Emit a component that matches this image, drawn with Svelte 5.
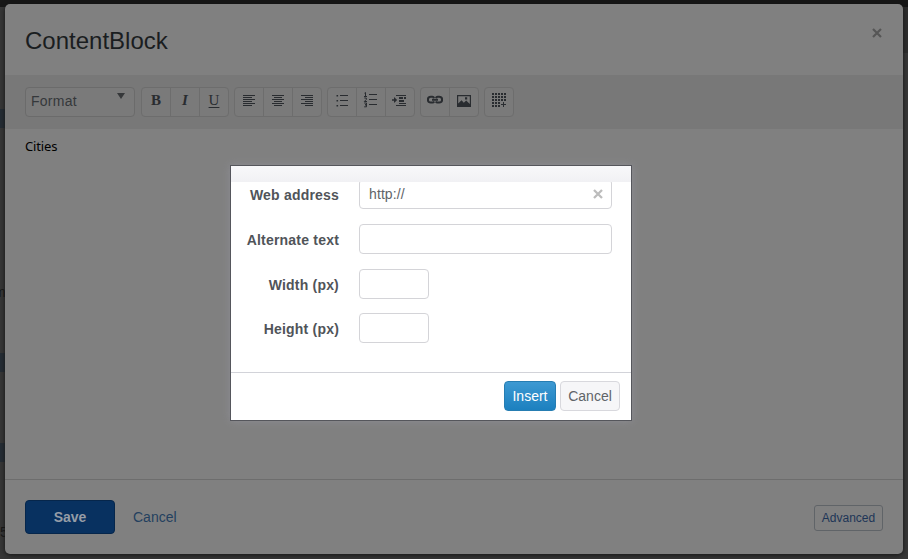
<script>
  const groups = [
    ['bold', 'italic', 'underline'],
    ['left', 'center', 'right'],
    ['bullets', 'numbers', 'indent'],
    ['link', 'image'],
    ['table']
  ];
  const letters = { bold: 'B', italic: 'I', underline: 'U' };
  const lines = {
    left: 'M1 3.5h12M1 5.5h9M1 7.5h12M1 9.5h9M1 11.5h12M1 13.5h9',
    center: 'M1 3.5h12M3 5.5h8M1 7.5h12M3 9.5h8M1 11.5h12M3 13.5h8',
    right: 'M1 3.5h12M5 5.5h8M1 7.5h12M5 9.5h8M1 11.5h12M5 13.5h8'
  };
  const dots = [];
  for (let r = 0; r < 5; r++)
    for (let c = 0; c < 5; c++) if (!(r >= 3 && c >= 3)) dots.push([c * 3, r * 3]);
</script>

<div class="page">
  <div class="topbar"></div>
  <div class="strip s1"></div>
  <div class="strip s2"></div>
  <div class="strip s3"></div>
  <span class="peek p1">m</span>
  <span class="peek p2">5</span>
  <div class="right-head"></div>

  <section class="modal">
    <header>
      <h1>ContentBlock</h1>
      <svg class="close" width="10" height="10" viewBox="0 0 10 10"><path d="M1 1l8 8M9 1l-8 8" /></svg>
    </header>
    <div class="toolbar">
      <div class="format"><span>Format</span><i></i></div>
      {#each groups as group}
        <div class="group">
          {#each group as name}
            <button aria-label={name}>
              {#if letters[name]}
                <span class={name}>{letters[name]}</span>
              {:else}
                <svg width="16" height="16" viewBox="0 0 16 16">
                  {#if lines[name]}
                    <path class="line" d={lines[name]} transform="translate(1 0)" />
                  {:else if name === 'bullets'}
                    <path class="line" d="M6 3.5h8M6 8.5h8M6 13.5h8" />
                    <path d="M2.5 3h1.6v1.6h-1.6zM2.5 8h1.6v1.6h-1.6zM2.5 13h1.6v1.6h-1.6z" />
                  {:else if name === 'numbers'}
                    <path class="line" d="M6 2.5h8M6 7.5h8M6 12.5h8" />
                    <path class="line" d="M1.5 1.2l1-.7v4M1 4.5h3M1.3 6h2v1.5L1.3 9.5h2.7M1.2 11h2.3v1.8h-1.5h1.5v2h-2.3" />
                  {:else if name === 'indent'}
                    <path class="line" d="M4 3.5h10M7 11.5h7M4 13.5h10" />
                    <path class="thick" d="M7 6h4M12 6h2M7 9h5" />
                    <path d="M0 7.3h2V5l3.2 3L2 11V8.7H0z" />
                  {:else if name === 'link'}
                    <path class="ring" d="M7.2 5.9Q6.6 4.8 5.4 4.8H3.8a2.9 2.9 0 0 0 0 5.8h1.6Q6.6 10.6 7.2 9.5M8.8 9.5q.6 1.1 1.8 1.1h1.6a2.9 2.9 0 0 0 0-5.8h-1.6Q9.4 4.8 8.8 5.9M5 7.7h6" />
                  {:else if name === 'image'}
                    <path fill-rule="evenodd" d="M1 3h14v12H1zM2.2 4.2v7.3L5.5 8.3l2.3 2.5 2.4-2.4 3.6 3.6V4.2zM9 5.2h2.2v2.2H9z" />
                  {:else}
                    {#each dots as [x, y]}<rect x={x + 1} y={y + 1} width="2" height="2" />{/each}
                    <path class="line" d="M12.5 10v5M10 12.5h5" />
                  {/if}
                </svg>
              {/if}
            </button>
          {/each}
        </div>
      {/each}
    </div>
    <div class="content">Cities</div>
    <footer>
      <button class="save">Save</button>
      <span class="cancel">Cancel</span>
      <button class="advanced">Advanced</button>
    </footer>
  </section>

  <section class="dialog">
    <div class="cap"></div>
    <div class="form">
      <div class="row first">
        <label for="address">Web address</label>
        <div class="field" id="address">
          <span>http://</span>
          <svg width="10" height="10" viewBox="0 0 10 10"><path d="M1 1l8 8M9 1l-8 8" /></svg>
        </div>
      </div>
      <div class="row"><label for="alt">Alternate text</label><div class="field" id="alt"></div></div>
      <div class="row"><label for="width">Width (px)</label><div class="field small" id="width"></div></div>
      <div class="row last"><label for="height">Height (px)</label><div class="field small" id="height"></div></div>
    </div>
    <div class="actions">
      <button class="insert">Insert</button>
      <button class="dismiss">Cancel</button>
    </div>
  </section>
</div>

<style>
  :global(body) { margin: 0; }
  * { box-sizing: border-box; }
  button { font: inherit; padding: 0; margin: 0; border: 0; background: none; }
  .page {
    position: relative; width: 908px; height: 559px; overflow: hidden; padding: 4px 5px 5px;
    background: #373737; font: 14px 'Liberation Sans', Arial, sans-serif;
  }
  .topbar { position: absolute; inset: 0 0 auto; height: 7px; background: #171717; }
  .right-head { position: absolute; right: 0; top: 7px; width: 5px; height: 46px; background: #2d2d2d; }
  .strip { position: absolute; left: 0; width: 5px; height: 19px; background: #252d35; }
  .s1 { top: 109px; }
  .s2 { top: 353px; }
  .s3 { top: 443px; }
  .peek { position: absolute; left: -6px; font-size: 14px; color: #171717; }
  .p1 { top: 284px; }
  .p2 { top: 524px; left: 0; }

  .modal {
    position: relative; width: 898px; height: 550px; display: flex; flex-direction: column;
    background: #808080; border-radius: 5px; overflow: hidden; box-shadow: 0 1px 5px #151515;
  }
  header { height: 71px; display: flex; justify-content: space-between; padding: 22px 21px 0 20px; }
  h1 { margin: 0; font-size: 24px; line-height: 30px; font-weight: 400; color: #1a1d20; }
  .close { margin-top: 2px; }
  .close path { stroke: #565656; stroke-width: 2.2; fill: none; }
  .toolbar { height: 54px; background: #787878; padding: 12px 20px; display: flex; gap: 5px; }
  .format {
    width: 110px; height: 30px; margin-right: 1px; border: 1px solid #6b6b6b; border-radius: 4px; background: #7a7a7a;
    padding: 0 9px 0 5px; display: flex; justify-content: space-between; line-height: 27px; color: #35383b;
    letter-spacing: .25px;
  }
  .format i { margin-top: 5px; width: 0; height: 0; border: 4px solid transparent; border-top: 6px solid #36383a; border-bottom: 0; }
  .group { display: flex; height: 30px; border: 1px solid #6d6d6d; border-radius: 4px; background: #7a7a7a; }
  .group button {
    width: 28px; height: 28px; display: flex; align-items: center; justify-content: center;
    color: #292c30; font: 15px/20px 'Liberation Serif', serif;
  }
  .group button + button { width: 29px; border-left: 1px solid #6d6d6d; }
  .group svg { margin-top: -4px; fill: #292c30; }
  .group span { margin-top: -4px; }
  .line { stroke: #292c30; stroke-width: 1; fill: none; }
  .thick { stroke: #292c30; stroke-width: 1.8; fill: none; }
  .ring { stroke: #292c30; stroke-width: 2; fill: none; }
  .bold { font-weight: 700; }
  .italic { font-style: italic; font-weight: 700; }
  .underline { text-decoration: underline; text-underline-offset: 2px; }
  .content { flex: 1; padding: 7px 20px; font: 13px/20px 'Noto Sans', sans-serif; letter-spacing: -.15px; color: #000; }
  footer { height: 75px; border-top: 1px solid #6d6d6d; padding: 20px 20px 0; display: flex; }
  .save {
    width: 90px; height: 34px; border: 1px solid #06264b; border-radius: 4px; background: #083160;
    color: #959da7; font-weight: 700;
  }
  .cancel { margin-left: 18px; line-height: 34px; color: #24405f; }
  .advanced {
    width: 69px; height: 26px; margin: 5px 0 0 auto; border: 1px solid #606468; border-radius: 3px;
    font-size: 12px; color: #1d3557;
  }

  .dialog {
    position: absolute; left: 230px; top: 165px; width: 402px; height: 256px; display: flex; flex-direction: column;
    background: #fff; border: 1px solid #55565c; box-shadow: 0 0 8px #8d8d94;
  }
  .cap { height: 16px; background: linear-gradient(#f8f8fa, #f1f1f4); }
  .form { height: 191px; overflow: hidden; display: flex; flex-direction: column; gap: 15px; border-bottom: 1px solid #d2d3d9; }
  .row { display: flex; gap: 20px; height: 30px; flex: none; }
  .first { margin-top: -3px; }
  .last { margin-top: -1px; }
  label { width: 108px; text-align: right; font-weight: 700; line-height: 32px; color: #505459; letter-spacing: .2px; }
  .field {
    width: 253px; height: 30px; border: 1px solid #d4d4d8; border-radius: 4px; padding: 0 8px 0 9px;
    display: flex; align-items: center; justify-content: space-between; color: #606468;
  }
  .field span { letter-spacing: .1px; }
  .field path { stroke: #bcbcbc; stroke-width: 2.3; }
  .small { width: 70px; }
  .actions { flex: 1; display: flex; justify-content: flex-end; gap: 4px; padding: 8px 11px 0 0; }
  .insert, .dismiss { height: 30px; border-radius: 4px; }
  .insert { width: 52px; color: #fff; border: 1px solid #267db2; background: linear-gradient(#3d99d2, #1c80bf); }
  .dismiss { width: 60px; color: #606468; border: 1px solid #d8d8dd; background: #f6f6f8; }
</style>
